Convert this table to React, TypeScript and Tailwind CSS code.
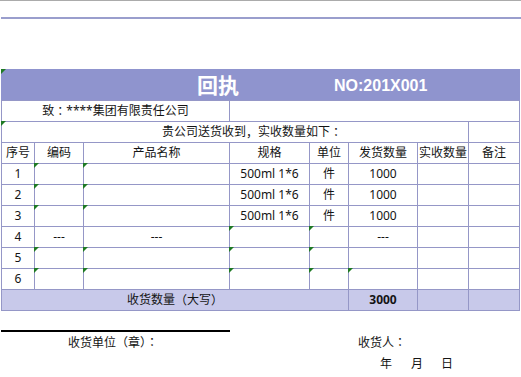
import React from "react";

const BC = "border-[#9597c7]";

function Tri({ cls = "-left-px -top-px" }: { cls?: string }) {
  return (
    <svg className={`absolute ${cls}`} width="5" height="5" viewBox="0 0 5 5">
      <polygon points="0,0 5,0 0,5" fill="#1f7a24" />
    </svg>
  );
}

function P({ children }: { children: React.ReactNode }) {
  return <span style={{ fontFamily: "'Noto Sans CJK JP', 'Noto Sans CJK SC', sans-serif" }}>{children}</span>;
}

type CellProps = {
  w: string;
  children?: React.ReactNode;
  tri?: boolean;
  cls?: string;
};

function Cell({ w, children, tri, cls = "" }: CellProps) {
  return (
    <div className={`relative ${w} h-full border-r ${BC} flex items-center justify-center shrink-0 ${cls}`}>
      {tri && <Tri />}
      {children}
    </div>
  );
}

const W = ["w-[33px]", "w-[49px]", "w-[146px]", "w-[80px]", "w-[39px]", "w-[69px]", "w-[51px]", "w-[51px]"];

type Row = {
  n: string;
  code: string;
  name: string;
  spec: string;
  unit: string;
  qty: string;
  tris: number[];
};

const rows: Row[] = [
  { n: "1", code: "", name: "", spec: "500ml 1*6", unit: "件", qty: "1000", tris: [1, 2] },
  { n: "2", code: "", name: "", spec: "500ml 1*6", unit: "件", qty: "1000", tris: [1, 2] },
  { n: "3", code: "", name: "", spec: "500ml 1*6", unit: "件", qty: "1000", tris: [1, 2] },
  { n: "4", code: "---", name: "---", spec: "", unit: "", qty: "---", tris: [3, 4] },
  { n: "5", code: "", name: "", spec: "", unit: "", qty: "", tris: [1, 2, 3, 4] },
  { n: "6", code: "", name: "", spec: "", unit: "", qty: "", tris: [1, 2, 3, 4, 5] },
];

export default function App() {
  const rowCls = `flex h-[21px] border-b border-l ${BC}`;
  return (
    <div
      className="w-[521px] h-[377px] bg-white overflow-hidden text-[12px] leading-none text-[#141414]"
      style={{ fontFamily: "'Noto Sans', 'Noto Sans CJK SC', sans-serif" }}
    >
      <div className="h-px bg-[#ababab]" />
      <div className="mt-[16px] ml-[1px] h-[2px] bg-[#9a9ecd]" />

      <div className="mt-[50px] ml-[1px] w-[519px]">
        {/* title band */}
        <div className={`relative flex items-center h-[32px] bg-[#8f94ce] border-b ${BC} text-white font-bold`}>
          <Tri cls="left-0 top-0" />
          <span className="ml-[196px] text-[21px] mt-[2px]">回执</span>
          <span
            className="ml-[95px] text-[16px] mt-[3px]"
            style={{ fontFamily: "'Liberation Sans', 'Noto Sans', sans-serif" }}
          >
            NO:201X001
          </span>
        </div>

        {/* to row */}
        <div className={rowCls}>
          <Cell w="w-[228px]">
            致<P>：</P>****集团有限责任公司
          </Cell>
          <Cell w="w-[290px]" />
        </div>

        {/* notice row */}
        <div className={rowCls}>
          <Cell w="w-[467px]" cls="!justify-start pl-[160px]" tri>
            贵公司送货收到<P>，</P>实收数量如下<P>：</P>
          </Cell>
          <Cell w="w-[51px]" />
        </div>

        {/* header */}
        <div className={rowCls}>
          {["序号", "编码", "产品名称", "规格", "单位", "发货数量", "实收数量", "备注"].map((h, i) => (
            <Cell key={h} w={W[i]}>
              {h}
            </Cell>
          ))}
        </div>

        {rows.map((r) => {
          const vals = [r.n, r.code, r.name, r.spec, r.unit, r.qty, "", ""];
          return (
            <div key={r.n} className={rowCls}>
              {vals.map((v, i) => (
                <Cell key={i} w={W[i]} tri={r.tris.includes(i)}>
                  {v}
                </Cell>
              ))}
            </div>
          );
        })}

        {/* total row */}
        <div className={`${rowCls} bg-[#c8c9ea]`}>
          <Cell w="w-[347px]">
            收货数量<P>（</P>大写<P>）</P>
          </Cell>
          <Cell w="w-[69px]" cls="font-bold">
            3000
          </Cell>
          <Cell w="w-[51px]" />
          <Cell w="w-[51px]" />
        </div>
      </div>

      {/* signature area */}
      <div className="mt-[19px] ml-[1px] w-[229px] h-[2px] bg-black" />
      <div className="flex items-center h-[21px]">
        <div className="w-[358px] pl-[68px]">
          收货单位<P>（</P>章<P>）：</P>
        </div>
        <div>
          收货人<P>：</P>
        </div>
      </div>
      <div className="flex items-center h-[21px]">
        <span className="ml-[380px]">年</span>
        <span className="ml-[19px]">月</span>
        <span className="ml-[18px]">日</span>
      </div>
    </div>
  );
}
